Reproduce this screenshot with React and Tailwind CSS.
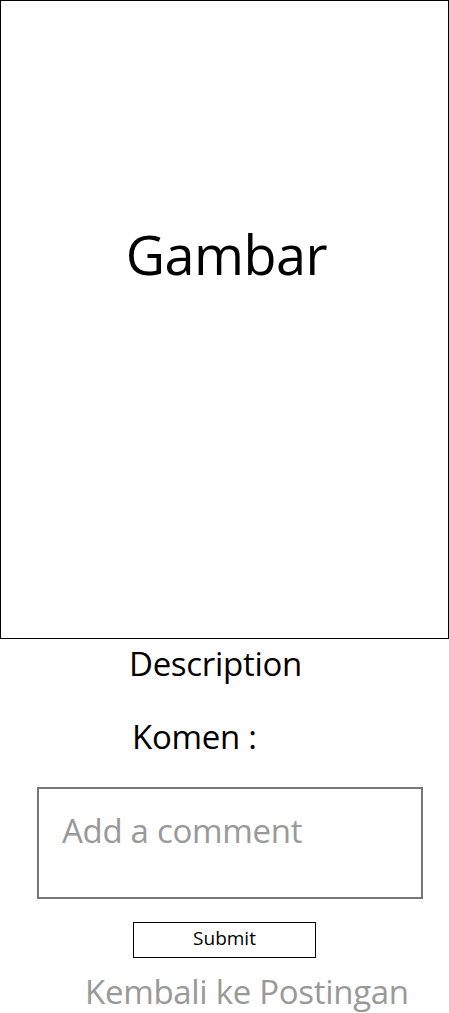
import React from "react";

function App() {
  return (
    <div
      className="w-[449px] min-h-[1013px] bg-white text-black"
      style={{ fontFamily: "'Open Sans', 'Noto Sans', sans-serif" }}
    >
      <div className="h-[639px] w-[449px] border border-black flex items-center justify-center pb-[132px]">
        <h1 className="text-[54px] leading-none ml-[4px] tracking-[-0.5px]">Gambar</h1>
      </div>

      <div className="flex flex-col">
        <p className="mt-[5px] pl-[129px] text-[33px] leading-[40px] tracking-[-0.3px]">Description</p>
        <p className="mt-[33px] pl-[132px] text-[33px] leading-[40px] tracking-[-0.3px]">Komen :</p>

        <textarea
          placeholder="Add a comment"
          className="mt-[30px] ml-[37px] w-[386px] h-[112px] border-2 border-[#777777] px-[23px] pt-[22px] pb-0 text-[33px] leading-[40px] resize-none outline-none placeholder:text-[#999999] tracking-[-0.3px]"
        />

        <button className="mt-[23px] ml-[133px] w-[183px] h-[36px] border border-black text-[19px] font-medium leading-none pb-[3px]">
          Submit
        </button>

        <a className="mt-[14px] ml-[85px] text-[33px] leading-[40px] text-[#999999] tracking-[-0.3px]">
          Kembali ke Postingan
        </a>
      </div>
    </div>
  );
}

export default App;
